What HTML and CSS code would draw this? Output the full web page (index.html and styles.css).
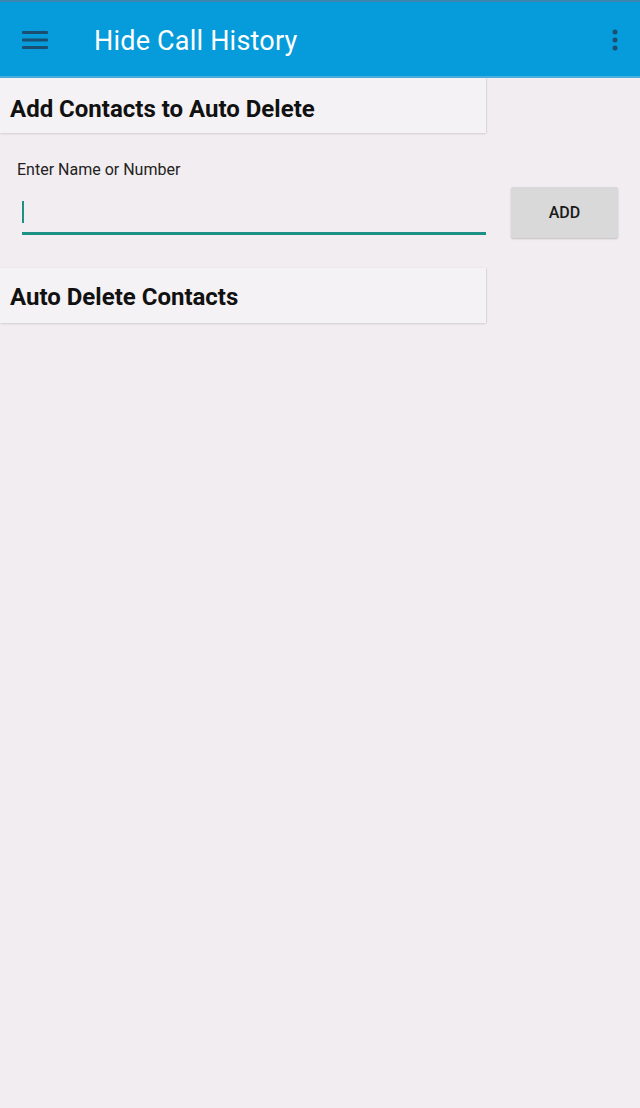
FILE: index.html
```html
<!DOCTYPE html>
<html>
<head>
<meta charset="utf-8">
<link rel="stylesheet" href="styles.css">
</head>
<body>
<header class="appbar">
  <svg class="menu-icon" width="26" height="20" viewBox="0 0 26 20"><rect x="0" y="1" width="26" height="3" rx="1" fill="#1b4f72"/><rect x="0" y="8.5" width="26" height="3" rx="1" fill="#1b4f72"/><rect x="0" y="16" width="26" height="3" rx="1" fill="#1b4f72"/></svg>
  <h1 class="title">Hide Call History</h1>
  <svg class="more-icon" width="6" height="22" viewBox="0 0 6 22"><circle cx="3" cy="3" r="2.5" fill="#1b4f72"/><circle cx="3" cy="11" r="2.5" fill="#1b4f72"/><circle cx="3" cy="19" r="2.5" fill="#1b4f72"/></svg>
</header>
<main class="content">
  <div class="section-card"><h2 class="section-title">Add Contacts to Auto Delete</h2></div>
  <div class="form">
    <label class="field-label">Enter Name or Number</label>
    <div class="field-row">
      <div class="input-wrap"><span class="cursor"></span></div>
      <button class="add-btn">ADD</button>
    </div>
  </div>
  <div class="section-card second"><h2 class="section-title">Auto Delete Contacts</h2></div>
</main>
</body>
</html>
```

FILE: styles.css
```css
* { box-sizing: border-box; }
html, body { margin: 0; padding: 0; }
body {
  width: 640px;
  height: 1108px;
  background: #f2edf1;
  font-family: Roboto, "Noto Sans", sans-serif;
  overflow: hidden;
}
.appbar {
  height: 78px;
  background: #069bda;
  border-top: 2px solid #3a86b0;
  border-bottom: 2px solid #4aaee0;
  display: flex;
  align-items: center;
  padding: 0 22px 0 22px;
}
.menu-icon { flex: none; margin-top: 1px; }
.title {
  margin: 3px 0 0 46px;
  font-size: 27px;
  font-weight: 400;
  color: #ffffff;
  flex: 1;
  letter-spacing: 0.2px;
}
.more-icon { flex: none; margin-top: 1px; }
.content { display: flex; flex-direction: column; }
.section-card {
  width: 486px;
  height: 55px;
  background: #f5f2f5;
  box-shadow: 0 1px 2px rgba(0,0,0,0.12), 1px 0 1px rgba(0,0,0,0.05);
  display: flex;
  align-items: center;
  padding-left: 10px;
  padding-top: 6px;
}
.section-title {
  margin: 0;
  font-size: 24px;
  font-weight: 700;
  color: #111111;
}
.form { padding: 27px 20px 0 17px; }
.field-label {
  display: block;
  font-size: 16px;
  color: #222222;
  line-height: 20px;
}
.field-row {
  display: flex;
  align-items: flex-start;
  margin-top: 7px;
}
.input-wrap {
  width: 464px;
  margin-left: 5px;
  height: 48px;
  border-bottom: 3px solid #1e9185;
  padding-top: 14px;
}
.cursor {
  display: block;
  width: 2px;
  height: 22px;
  background: #1e9185;
}
.add-btn {
  margin-left: 25px;
  width: 107px;
  height: 51px;
  border: none;
  border-radius: 2px;
  background: #d9d9d9;
  box-shadow: 0 1px 2px rgba(0,0,0,0.2);
  font-family: Roboto, "Noto Sans", sans-serif;
  font-size: 16px;
  font-weight: 500;
  color: #1a1a1a;
  padding: 0;
  margin-top: 0;
}
.second { margin-top: 30px; padding-top: 2px; }
```
